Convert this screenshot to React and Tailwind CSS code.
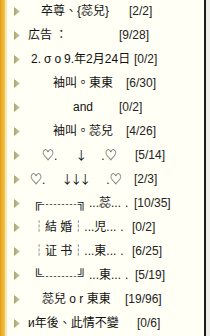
const rows = [
  { label: "卒尊、{蕊兒}", x: 41, cx: 129, count: "[2/2]" },
  { label: "広告 ：", x: 28, cx: 119, count: "[9/28]" },
  {
    label: (
      <span>
        2.<span className="ml-[3px]">σ</span>
        <span className="ml-[3px]">ο</span>
        <span className="ml-[3px]">9.年2月24日</span>
      </span>
    ),
    x: 31,
    cx: 134,
    count: "[0/2]",
  },
  { label: "袖叫。東東", x: 53, cx: 126, count: "[6/30]" },
  { label: "and", x: 73, cx: 119, count: "[0/2]" },
  { label: "袖叫。蕊兒", x: 53, cx: 126, count: "[4/26]" },
  {
    label: (
      <>
        <span>♡.</span>
        <span className="ml-[18px] font-['Noto_Sans_CJK_TC',sans-serif]">↓</span>
        <span className="ml-[14px]">.♡</span>
      </>
    ),
    x: 42,
    cx: 135,
    count: "[5/14]",
  },
  {
    label: (
      <>
        <span>♡.</span>
        <span className="ml-[16px] font-['Noto_Sans_CJK_TC',sans-serif] tracking-[-3px]">↓↓↓</span>
        <span className="ml-[18px]">.♡</span>
      </>
    ),
    x: 30,
    cx: 134,
    count: "[2/3]",
  },
  {
    label: (
      <>
        <span>╔</span>
        <span className="text-[9px] tracking-[1px]">---------</span>
        <span>╗</span>
        <span className="ml-[3px]">...蕊...</span>
        <span className="ml-[4px]">.</span>
      </>
    ),
    x: 33,
    cx: 134,
    count: "[10/35]",
  },
  {
    label: (
      <>
        <span>┆結 婚┆</span>
        <span>...児...</span>
        <span className="ml-[4px]">.</span>
      </>
    ),
    x: 33,
    cx: 132,
    count: "[0/2]",
  },
  {
    label: (
      <>
        <span>┆证 书┆</span>
        <span>...東...</span>
        <span className="ml-[4px]">.</span>
      </>
    ),
    x: 33,
    cx: 132,
    count: "[6/25]",
  },
  {
    label: (
      <>
        <span>╚</span>
        <span className="text-[9px] tracking-[1px]">---------</span>
        <span>╝</span>
        <span className="ml-[3px]">...東...</span>
        <span className="ml-[4px]">.</span>
      </>
    ),
    x: 33,
    cx: 135,
    count: "[5/19]",
  },
  { label: "蕊兒 o r 東東", x: 42, cx: 125, count: "[19/96]" },
  { label: "и年後、此情不變", x: 28, cx: 137, count: "[0/6]" },
];

function Arrow() {
  return (
    <svg width="6" height="9" viewBox="0 0 6 9" className="ml-[7px] shrink-0">
      <defs>
        <linearGradient id="tri" x1="0" y1="0" x2="1" y2="0">
          <stop offset="0" stopColor="#a7a46e" />
          <stop offset="1" stopColor="#cfcda6" />
        </linearGradient>
      </defs>
      <polygon points="0,0 6,4.5 0,9" fill="url(#tri)" />
    </svg>
  );
}

export default function App() {
  return (
    <div className="flex h-[336px] w-[210px] overflow-hidden bg-[#fffff6]">
      <div className="w-[5px] shrink-0 bg-gradient-to-r from-[#e59d0c] to-[#f3c64c]" />
      <div className="w-[2px] shrink-0 bg-[#f9e9b0]" />
      <div className="-mt-[1px] flex flex-1 flex-col">
        {rows.map((r, i) => (
          <div key={i} className="flex h-[24px] shrink-0 items-center">
            <Arrow />
            <span
              className="shrink-0 whitespace-nowrap font-['Liberation_Sans','Noto_Sans_CJK_TC',sans-serif] text-[12px] leading-none text-[#111]"
              style={{ marginLeft: r.x - 20, width: r.cx - r.x }}
            >
              {r.label}
            </span>
            <span className="whitespace-nowrap font-['Liberation_Sans',Arial,sans-serif] text-[12px] leading-none text-[#222]">
              {r.count}
            </span>
          </div>
        ))}
      </div>
      <div className="w-[2px] shrink-0 bg-[#1c1c1c]" />
      <div className="w-[4px] shrink-0 bg-[#eeeee6]" />
    </div>
  );
}
